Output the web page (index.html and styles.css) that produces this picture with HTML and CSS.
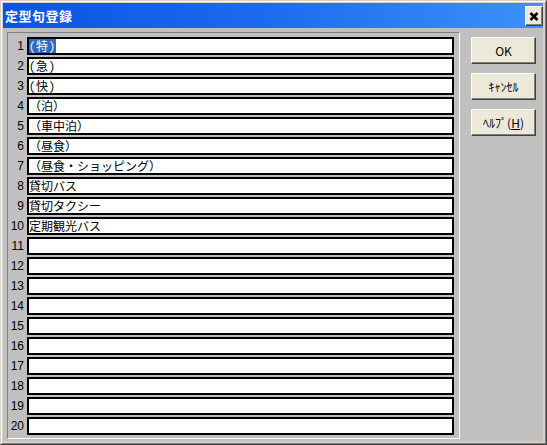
FILE: index.html
```html
<!DOCTYPE html>
<html lang="ja">
<head>
<meta charset="utf-8">
<title>定型句登録</title>
<link rel="stylesheet" href="styles.css">
</head>
<body>
<div class="window">
  <div class="edge1">
    <div class="edge2">
      <div class="titlebar">
        <span class="title">定型句登録</span>
        <div class="close">
          <svg width="10" height="9" viewBox="0 0 10 9"><path d="M1.5 1 L8.5 8 M8.5 1 L1.5 8" stroke="#000" stroke-width="2.6" fill="none"/></svg>
        </div>
      </div>
      <div class="content">
        <div class="group">
          <div class="row"><span class="num">1</span><div class="field"><span class="sel hw">(特)</span></div></div>
          <div class="row"><span class="num">2</span><div class="field"><span class="hw">(急)</span></div></div>
          <div class="row"><span class="num">3</span><div class="field"><span class="hw">(快)</span></div></div>
          <div class="row"><span class="num">4</span><div class="field">（泊）</div></div>
          <div class="row"><span class="num">5</span><div class="field">（車中泊）</div></div>
          <div class="row"><span class="num">6</span><div class="field">（昼食）</div></div>
          <div class="row"><span class="num">7</span><div class="field">（昼食・ショッピング）</div></div>
          <div class="row"><span class="num">8</span><div class="field">貸切バス</div></div>
          <div class="row"><span class="num">9</span><div class="field">貸切タクシー</div></div>
          <div class="row"><span class="num">10</span><div class="field">定期観光バス</div></div>
          <div class="row"><span class="num">11</span><div class="field"></div></div>
          <div class="row"><span class="num">12</span><div class="field"></div></div>
          <div class="row"><span class="num">13</span><div class="field"></div></div>
          <div class="row"><span class="num">14</span><div class="field"></div></div>
          <div class="row"><span class="num">15</span><div class="field"></div></div>
          <div class="row"><span class="num">16</span><div class="field"></div></div>
          <div class="row"><span class="num">17</span><div class="field"></div></div>
          <div class="row"><span class="num">18</span><div class="field"></div></div>
          <div class="row"><span class="num">19</span><div class="field"></div></div>
          <div class="row"><span class="num">20</span><div class="field"></div></div>
        </div>
        <div class="buttons">
          <div class="btn">OK</div>
          <div class="btn">ｷｬﾝｾﾙ</div>
          <div class="btn">ﾍﾙﾌﾟ(<u>H</u>)</div>
        </div>
      </div>
    </div>
  </div>
</div>
</body>
</html>
```
FILE: styles.css
```css
* { box-sizing: border-box; }
html, body { margin: 0; padding: 0; }
body {
  width: 547px;
  height: 445px;
  overflow: hidden;
  font-family: "Noto Sans CJK JP", "Liberation Sans", sans-serif;
  font-size: 12px;
  color: #000;
}
.window {
  width: 547px;
  height: 445px;
  border: 1px solid;
  border-color: #d4d0c8 #404040 #404040 #d4d0c8;
  background: #c0c0c0;
}
.edge1 {
  height: 100%;
  border: 1px solid;
  border-color: #ffffff #808080 #808080 #ffffff;
}
.edge2 {
  height: 100%;
  border-style: solid;
  border-width: 1px 2px 2px 1px;
  border-color: #d4d0c8;
  display: flex;
  flex-direction: column;
  background: #c0c0c0;
}
.titlebar {
  height: 25px;
  flex: none;
  display: flex;
  align-items: center;
  justify-content: space-between;
  background: linear-gradient(to right, #0a54e2 0%, #1c6cf0 50%, #3d92f8 100%);
  padding: 0 0 0 2px;
}
.title {
  color: #fff;
  font-weight: bold;
  font-size: 13px;
  line-height: 16px;
  letter-spacing: 0.5px;
}
.close {
  width: 18px;
  height: 20px;
  margin-top: 1px;
  background: #ece9d8;
  border: 1px solid;
  border-color: #ffffff #404040 #404040 #ffffff;
  box-shadow: inset -1px -1px 0 #808080;
  display: flex;
  align-items: center;
  justify-content: center;
}
.content {
  flex: 1;
  display: flex;
  align-items: flex-start;
  padding: 4px 0 0 4px;
}
.group {
  width: 453px;
  height: 407px;
  border: 1px solid;
  border-color: #808080 #ffffff #ffffff #808080;
  padding: 4px 5px 3px 0;
  display: flex;
  flex-direction: column;
  gap: 2px;
}
.row {
  display: flex;
  height: 18px;
  align-items: center;
}
.num {
  width: 19px;
  padding-right: 3px;
  text-align: right;
  font-family: "Liberation Sans", sans-serif;
  font-size: 12px;
  line-height: 14px;
  color: #000;
}
.field {
  width: 427px;
  height: 18px;
  border: 2px solid #000;
  background: #fff;
  font-size: 12px;
  line-height: 14px;
  white-space: pre;
  overflow: hidden;
}
.hw { font-feature-settings: "hwid" 1; letter-spacing: 1px; }
.sel {
  background: #316ac5;
  color: #fff;
  display: inline-block;
}
.buttons {
  margin-left: 11px;
  margin-top: 5px;
  display: flex;
  flex-direction: column;
  gap: 9px;
}
.btn {
  width: 65px;
  height: 27px;
  background: #ece9d8;
  border: 1px solid;
  border-color: #ffffff #404040 #404040 #ffffff;
  box-shadow: inset -1px -1px 0 #808080;
  display: flex;
  align-items: center;
  justify-content: center;
  font-size: 12px;
  line-height: 14px;
}
.btn u { text-decoration: underline; text-underline-offset: 1px; }
```
